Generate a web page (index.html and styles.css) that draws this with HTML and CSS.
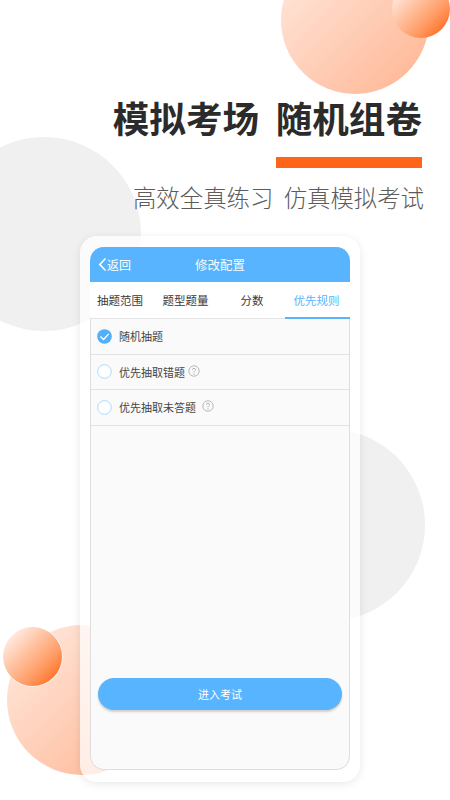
FILE: index.html
```html
<!DOCTYPE html>
<html lang="zh">
<head>
<meta charset="utf-8">
<title>模拟考场</title>
<link rel="stylesheet" href="styles.css">
</head>
<body>
<div class="page">
  <div class="blob gray gray-left"></div>
  <div class="blob gray gray-right"></div>
  <div class="blob peach peach-top"></div>
  <div class="blob orange orange-top"></div>
  <div class="blob peach peach-bottom"></div>

  <header class="hero">
    <h1>模拟考场&nbsp;&nbsp;随机组卷</h1>
    <div class="rule"></div>
    <p>高效全真练习&nbsp;&nbsp;仿真模拟考试</p>
  </header>

  <section class="phone">
    <div class="screen">
      <div class="topbar">
        <div class="back">
          <svg width="9" height="15" viewBox="0 0 9 15"><path d="M7.5 1.5 L1.8 7.5 L7.5 13.5" fill="none" stroke="#fff" stroke-width="1.6"/></svg>
          <span>返回</span>
        </div>
        <div class="title">修改配置</div>
      </div>
      <nav class="tabs">
        <div class="tab t1">抽题范围</div>
        <div class="tab t2">题型题量</div>
        <div class="tab t3">分数</div>
        <div class="tab t4 active">优先规则</div>
      </nav>
      <ul class="options">
        <li class="option">
          <svg class="radio" width="15" height="15" viewBox="0 0 16 16"><circle cx="8" cy="8" r="7.8" fill="#4fb0fb"/><path d="M3.6 8 L7 11.2 L12.5 5.2" fill="none" stroke="#fff" stroke-width="1.5"/></svg>
          <span>随机抽题</span>
        </li>
        <li class="option">
          <svg class="radio" width="15" height="15" viewBox="0 0 16 16"><circle cx="8" cy="8" r="7.3" fill="#fff" stroke="#a9d9fc" stroke-width="1"/></svg>
          <span>优先抽取错题</span>
          <svg class="help h1" width="12" height="12" viewBox="0 0 12 12"><circle cx="6" cy="6" r="5.2" fill="none" stroke="#a8a8a8" stroke-width=".8"/><path d="M4.4 4.7 C4.4 2.9 7.6 2.9 7.6 4.7 C7.6 5.8 6 5.8 6 7.3" fill="none" stroke="#a0a0a0" stroke-width=".8"/><circle cx="6" cy="8.9" r=".55" fill="#a0a0a0"/></svg>
        </li>
        <li class="option">
          <svg class="radio" width="15" height="15" viewBox="0 0 16 16"><circle cx="8" cy="8" r="7.3" fill="#fff" stroke="#a9d9fc" stroke-width="1"/></svg>
          <span>优先抽取未答题</span>
          <svg class="help h2" width="12" height="12" viewBox="0 0 12 12"><circle cx="6" cy="6" r="5.2" fill="none" stroke="#a8a8a8" stroke-width=".8"/><path d="M4.4 4.7 C4.4 2.9 7.6 2.9 7.6 4.7 C7.6 5.8 6 5.8 6 7.3" fill="none" stroke="#a0a0a0" stroke-width=".8"/><circle cx="6" cy="8.9" r=".55" fill="#a0a0a0"/></svg>
        </li>
      </ul>
      <button class="start">进入考试</button>
    </div>
  </section>
  <div class="blob orange orange-bottom"></div>
</div>
</body>
</html>
```
FILE: styles.css
```css
* { box-sizing: border-box; margin: 0; padding: 0; }
html, body { width: 450px; height: 800px; overflow: hidden; background: #fff; }
body { font-family: "Noto Sans CJK SC", "Noto Sans", sans-serif; }
.page { position: relative; width: 450px; height: 800px; overflow: hidden; background: #fff; padding-top: 90px; }

.blob { position: absolute; border-radius: 50%; }
.gray { background: #f0f0f0; }
.gray-left { left: -53px; top: 137px; width: 194px; height: 194px; }
.gray-right { left: 233px; top: 429px; width: 192px; height: 192px; }
.peach { background: linear-gradient(135deg, #ffe6da 10%, #ffb998 90%); }
.peach-top { left: 281px; top: -54px; width: 148px; height: 148px; }
.peach-bottom { left: 7px; top: 625px; width: 150px; height: 150px; }
.orange { background: linear-gradient(135deg, #ffeee5 12%, #ff9a62 68%, #ff6a1e 92%); }
.orange-top { left: 392px; top: -20px; width: 58px; height: 58px; }
.orange-bottom { left: 3px; top: 627px; width: 59px; height: 59px; box-shadow: 0 0 0 1px rgba(255,255,255,.5); }

.hero { position: relative; display: flex; flex-direction: column; align-items: flex-end; padding-right: 28px; }
.hero h1 { font-size: 36.6px; line-height: 56px; font-weight: 700; color: #2b2b2b; white-space: nowrap; }
.hero .rule { width: 146px; height: 11px; margin-top: 11px; background: #ff6519; }
.hero p { margin-top: 11px; margin-right: -2px; font-size: 23.4px; line-height: 36px; font-weight: 300; color: #5c5c5c; white-space: nowrap; }

.phone { position: relative; width: 280px; height: 546px; margin: 21px 0 0 80px; padding: 11px 10px 12px; background: rgba(255,255,255,.72); border-radius: 17px; box-shadow: 0 2px 10px rgba(0,0,0,.09); }
.screen { position: relative; display: flex; flex-direction: column; height: 100%; background: #fafafa; box-shadow: inset 0 0 0 1px #dedede; border-radius: 14px; overflow: hidden; }

.topbar { position: relative; flex: none; display: flex; align-items: center; justify-content: center; height: 35px; background: #58b4fe; color: #fff; font-size: 12.5px; }
.back { position: absolute; left: 8px; top: 0; height: 35px; display: flex; align-items: center; gap: 0; font-size: 12px; }
.title { opacity: .95; }

.tabs { position: relative; flex: none; display: flex; height: 37px; background: #fff; border-bottom: 1px solid #e4e4e4; font-size: 11.5px; color: #3a3a3a; }
.tab { display: flex; align-items: center; justify-content: center; flex: none; height: 36px; }
.t1 { width: 60px; }
.t2 { width: 71px; }
.t3 { width: 64px; padding-right: 2px; }
.t4 { width: 65px; padding-right: 2px; }
.tab.active { color: #58b4fe; border-bottom: 2px solid #58b4fe; margin-bottom: -1px; height: 37px; }

.options { list-style: none; flex: none; }
.option { display: flex; align-items: center; height: 35.5px; padding-left: 7px; border-bottom: 1px solid #e2e2e2; font-size: 11px; color: #444; }
.radio { flex: none; margin-right: 7px; }
.help { flex: none; margin-bottom: 2px; }
.h1 { margin-left: 3px; }
.h2 { margin-left: 6px; }

.start { flex: none; display: block; width: 244px; height: 32px; margin: 252px 0 0 8px; border: 0; border-radius: 16px; background: #58b4fe; color: #fff; font-family: inherit; font-size: 11px; box-shadow: 0 2px 2px rgba(120,110,100,.3); }
```
